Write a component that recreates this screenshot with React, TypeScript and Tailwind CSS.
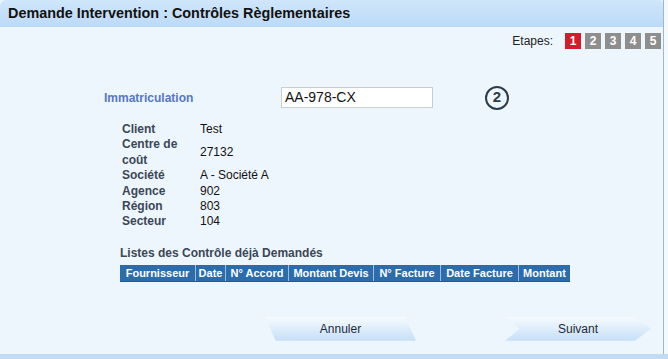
const infoRows: [string, string][] = [
  ["Client", "Test"],
  ["Centre de coût", "27132"],
  ["Société", "A - Société A"],
  ["Agence", "902"],
  ["Région", "803"],
  ["Secteur", "104"],
];

const columns: { label: string; width: string }[] = [
  { label: "Fournisseur", width: "w-[75px]" },
  { label: "Date", width: "w-[30px]" },
  { label: "N° Accord", width: "w-[63px]" },
  { label: "Montant Devis", width: "w-[85px]" },
  { label: "N° Facture", width: "w-[67px]" },
  { label: "Date Facture", width: "w-[78px]" },
  { label: "Montant", width: "w-[52px]" },
];

const Steps = () => (
  <div className="flex items-center justify-end gap-[4px] pr-[2px] pt-[5px]">
    <span className="mr-[8px] text-[12px] text-[#222]">Etapes:</span>
    {[1, 2, 3, 4, 5].map((n) => (
      <span
        key={n}
        className={`flex h-[16px] w-[16px] items-center justify-center text-[12px] font-bold text-white ${
          n === 1 ? "bg-[#d51a2a]" : "bg-[#8e8e8e]"
        }`}
      >
        {n}
      </span>
    ))}
  </div>
);

export default function App() {
  return (
    <div className="flex h-[359px] w-[668px] flex-col bg-[#f4f9fe] font-['Liberation_Sans',Arial,sans-serif]">
      <div className="flex flex-1 flex-col w-[664px] border-r border-[#9fb6cc] bg-[#eef6fd]">
        <div className="flex h-[27px] items-center rounded-tl-[6px] rounded-tr-[4px] bg-gradient-to-b from-[#cfe6fb] to-[#bcdaf6] pl-[8px]">
          <h1 className="text-[14.4px] font-bold text-[#111]">
            Demande Intervention : Contrôles Règlementaires
          </h1>
        </div>

        <div className="flex flex-1 flex-col">
          <Steps />

          <div className="mt-[37px] flex h-[21px] items-center">
            <span className="ml-[104px] w-[177px] text-[12px] font-bold text-[#5577c4]">
              Immatriculation
            </span>
            <div className="flex h-[21px] w-[152px] items-center border border-[#c9ced3] bg-white pl-[3px] text-[14px] text-[#111]">
              AA-978-CX
            </div>
            <div className="ml-[52px] flex h-[24px] w-[24px] items-center justify-center rounded-full border-[2.5px] border-[#2c3b4b] text-[15px] font-bold text-[#2c3b4b]">
              2
            </div>
          </div>

          <div className="ml-[122px] mt-[14px] grid grid-cols-[78px_auto] text-[12px] leading-[15.4px]">
            {infoRows.map(([label, value]) => (
              <div key={label} className="contents">
                <span className="w-[66px] font-bold text-[#3b4656]">{label}</span>
                <span className="self-center text-[#111]">{value}</span>
              </div>
            ))}
          </div>

          <div className="ml-[120px] mt-[14px] text-[12px] font-bold text-[#3b4656]">
            Listes des Contrôle déjà Demandés
          </div>
          <div className="ml-[120px] mt-[3px] flex h-[16px] w-[450px] bg-[#2c6cab] shadow-[0_1px_0_#1f5a95]">
            {columns.map((c, i) => (
              <div
                key={c.label}
                className={`${c.width} flex items-center justify-center text-[11px] font-bold text-white ${
                  i > 0 ? "border-l border-[#9dbcdc]" : ""
                }`}
              >
                {c.label}
              </div>
            ))}
          </div>

          <div className="mt-[36px] flex items-center">
            <button className="ml-[265px] flex h-[24px] w-[151px] items-center justify-center bg-gradient-to-b from-[#f6fafe] to-[#c5dff7] text-[12px] text-[#1d2a38] [clip-path:polygon(0_0,93%_0,100%_100%,7%_100%)]">
              Annuler
            </button>
            <button className="ml-[89px] flex h-[24px] w-[146px] items-center justify-center bg-gradient-to-b from-[#f6fafe] to-[#c5dff7] text-[12px] text-[#1d2a38] [clip-path:polygon(0_0,89%_0,100%_50%,89%_100%,0_100%,10%_50%)]">
              Suivant
            </button>
          </div>
        </div>
      </div>
      <div className="h-[5px] w-full bg-[#c0dcf5]" />
    </div>
  );
}
